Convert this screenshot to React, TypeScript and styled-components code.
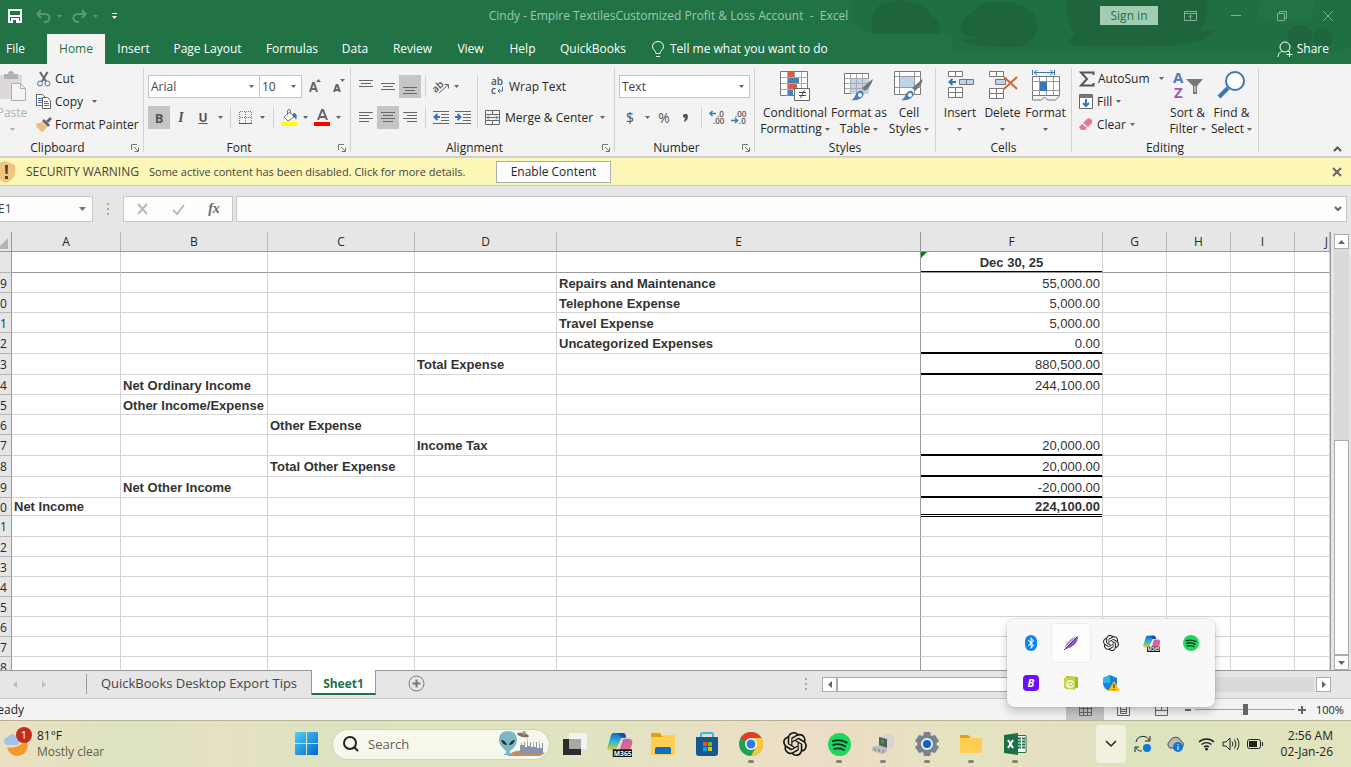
import React from 'react';
import styled, { createGlobalStyle, css } from 'styled-components';
import { SiOpenai } from 'react-icons/si';
import { FaBluetoothB } from 'react-icons/fa';

const GlobalStyle = createGlobalStyle`
  *, *::before, *::after { box-sizing: border-box; }
  html, body { margin: 0; height: 100%; }
  body { overflow: hidden; font-family: "Open Sans", "Noto Sans", sans-serif; font-size: 12px; line-height: 16px; color: #262626; }
  button, input, select { font: inherit; color: inherit; margin: 0; padding: 0; border: 0; background: none; border-radius: 0; }
  svg { display: block; flex: none; }
  h1, h2, p { margin: 0; font-size: inherit; font-weight: inherit; }
`;

const Window = styled.div`
  position: relative;
  display: flex;
  flex-direction: column;
  height: 100vh;
  overflow: hidden;
  background: #e6e6e6;
`;

/* ---------- title bar and tabs ---------- */

const Header = styled.header`
  position: relative;
  flex: none;
  background: #217346;
  color: #fff;
`;

const Clouds = styled.svg`
  position: absolute;
  top: 0;
  right: 0;
`;

const TitleBar = styled.div`
  position: relative;
  display: flex;
  align-items: center;
  height: 34px;
`;

const QuickAccess = styled.div`
  display: flex;
  align-items: center;
  gap: 1px;
  width: 237px;
  padding-bottom: 2px;
`;

const PlainButton = styled.button<{ $w?: number; $h?: number; $active?: boolean }>`
  display: flex;
  flex: none;
  align-items: center;
  justify-content: center;
  width: ${p => (p.$w ? `${p.$w}px` : 'auto')};
  height: ${p => (p.$h ? `${p.$h}px` : 'auto')};
  background: ${p => (p.$active ? '#c5c5c5' : 'transparent')};
`;

const ArrowPad = styled.span`
  margin-left: 6px;
`;

const DocTitle = styled.h1`
  flex: 1;
  padding-bottom: 2px;
  text-align: center;
  white-space: nowrap;
  color: #9bc9ae;
`;

const WindowControls = styled.div`
  display: flex;
  align-items: center;
  width: 251px;
  padding-bottom: 3px;
`;

const SignIn = styled.button`
  width: 58px;
  height: 19px;
  margin-right: 9px;
  background: #a0cdb3;
  color: #217346;
`;

const TabBar = styled.nav`
  position: relative;
  display: flex;
  height: 30px;
`;

const Tab = styled.button<{ $active?: boolean; $w: number }>`
  width: ${p => p.$w}px;
  white-space: nowrap;
  background: ${p => (p.$active ? '#f3f3f3' : 'transparent')};
  color: ${p => (p.$active ? '#217346' : '#fff')};
`;

const TellMe = styled.button`
  display: flex;
  align-items: center;
  gap: 6px;
  margin-left: 16px;
  white-space: nowrap;
`;

const Share = styled(TellMe)`
  margin-left: auto;
  margin-right: 22px;
  gap: 4px;
`;

/* ---------- ribbon ---------- */

const Ribbon = styled.div`
  display: flex;
  flex: none;
  height: 93px;
  padding-top: 4px;
  background: #f3f3f3;
  border-bottom: 1px solid #cdcdcd;
`;

const GroupBox = styled.section<{ $w: number; $edge?: boolean }>`
  display: flex;
  flex-direction: column;
  flex: none;
  width: ${p => p.$w}px;
  height: 84px;
  margin-left: ${p => (p.$edge ? -12 : 0)}px;
  border-right: 1px solid #d2d2d2;
`;

const GroupBody = styled.div`
  display: flex;
  flex: none;
  height: 71px;
`;

const GroupFoot = styled.div<{ $launcher?: boolean }>`
  display: grid;
  flex: none;
  grid-template-columns: ${p => (p.$launcher ? '1fr 16px' : '1fr')};
  align-items: center;
  height: 18px;
`;

const GroupName = styled.h2`
  text-align: center;
`;

const Rows = styled.div<{ $pad?: number }>`
  display: flex;
  flex-direction: column;
  gap: 8px;
  padding: 7px 0 0 ${p => p.$pad ?? 4}px;
`;

const Row = styled.div`
  display: flex;
  align-items: center;
  height: 23px;
`;

const List = styled.div<{ $left: number }>`
  display: flex;
  flex-direction: column;
  height: 69px;
  margin: -1px 0 0 ${p => p.$left}px;
`;

const ListButton = styled.button<{ $gap?: number }>`
  display: flex;
  align-items: center;
  gap: ${p => p.$gap ?? 3}px;
  height: 23px;
  white-space: nowrap;
`;

const Sep = styled.span<{ $h?: number; $l?: number; $r?: number }>`
  flex: none;
  width: 1px;
  height: ${p => p.$h ?? 21}px;
  margin: 0 ${p => p.$r ?? 4}px 0 ${p => p.$l ?? 4}px;
  background: #d2d2d2;
`;

const SelectWrap = styled.span<{ $w: number; $join?: boolean }>`
  position: relative;
  display: flex;
  align-items: center;
  width: ${p => p.$w}px;
  height: 23px;
  margin-left: ${p => (p.$join ? -1 : 0)}px;
  background: #fff;
  border: 1px solid #c5c5c5;
  svg { position: absolute; right: 5px; pointer-events: none; }
`;

const Select = styled.select`
  width: 100%;
  height: 100%;
  padding-left: 2px;
  appearance: none;
  outline: 0;
  color: #444;
`;

const Big = styled.button<{ $w: number; $dim?: boolean }>`
  display: flex;
  flex-direction: column;
  align-items: center;
  flex: none;
  width: ${p => p.$w}px;
  height: 71px;
  padding-top: 3px;
  white-space: nowrap;
  color: ${p => (p.$dim ? '#b1b1b1' : 'inherit')};
`;

const BigText = styled.span`
  margin-top: 3px;
  display: flex;
  flex-direction: column;
  align-items: center;
`;

const BigLine = styled.span`
  display: flex;
  align-items: center;
  gap: 3px;
  height: 16px;
`;

const Glyph = styled.span<{ $serif?: boolean; $size?: number; $kind?: string; $soft?: boolean }>`
  font-family: ${p => (p.$serif ? '"Liberation Serif", serif' : '"Open Sans", sans-serif')};
  font-size: ${p => p.$size ?? 14}px;
  font-weight: ${p => (p.$kind === 'plain' ? 500 : 700)};
  font-style: ${p => (p.$kind === 'italic' ? 'italic' : 'normal')};
  text-decoration: ${p => (p.$kind === 'underline' ? 'underline' : 'none')};
  color: ${p => (p.$soft ? '#6a6a6a' : '#555')};
`;

const CollapseButton = styled(PlainButton)`
  align-self: flex-end;
  margin: 0 9px 4px auto;
`;

/* ---------- warning and formula bars ---------- */

const Warning = styled.div`
  display: flex;
  align-items: center;
  flex: none;
  height: 29px;
  background: #fcf7b6;
  border-top: 1px solid #dfdb94;
  border-bottom: 1px solid #d3cf8b;
  white-space: nowrap;
  color: #444;
`;

const WarningTitle = styled.strong`
  width: 123px;
  margin-left: 10px;
  font-weight: 500;
`;

const WarningText = styled.p`
  width: 326px;
  font-size: 11px;
`;

const EnableButton = styled.button`
  width: 115px;
  height: 22px;
  margin-left: 21px;
  background: #fdfdfd;
  border: 1px solid #ababab;
  color: #262626;
`;

const CloseWarning = styled(PlainButton)`
  margin: 0 10px 0 auto;
`;

const FormulaRow = styled.div`
  display: flex;
  flex: none;
  height: 46px;
  padding: 10px 4px 0 0;
`;

const Field = styled.div<{ $w?: number; $edge?: boolean }>`
  display: flex;
  align-items: center;
  flex: ${p => (p.$w ? 'none' : '1')};
  width: ${p => (p.$w ? `${p.$w}px` : 'auto')};
  height: 26px;
  background: #fdfdfd;
  border: 1px solid #c6c6c6;
  border-left-width: ${p => (p.$edge ? 0 : 1)}px;
`;

const NameInput = styled.input`
  width: 74px;
  margin-left: -2px;
  outline: 0;
  color: #444;
`;

const FormulaInput = styled.input`
  flex: 1;
  min-width: 0;
  padding-left: 4px;
  outline: 0;
`;

const Dots = styled.span<{ $w: number }>`
  display: flex;
  flex-direction: column;
  align-items: center;
  justify-content: center;
  gap: 3px;
  width: ${p => p.$w}px;
  height: 26px;
  i { width: 2px; height: 2px; background: #a6a6a6; }
`;

/* ---------- sheet ---------- */

const SheetArea = styled.div`
  display: flex;
  flex: 1;
  min-height: 0;
`;

const GridClip = styled.div`
  flex: 1;
  min-width: 0;
  overflow: hidden;
  border-right: 1px solid #999;
`;

const Table = styled.table`
  width: 100%;
  table-layout: fixed;
  border-collapse: separate;
  border-spacing: 0;
  background: #fff;
`;

const ColHead = styled.th<{ $frozen?: boolean }>`
  height: 20px;
  padding: 1px 0 0;
  background: #e6e6e6;
  border-bottom: 1px solid #999;
  border-right: 1px solid ${p => (p.$frozen ? '#999' : '#b5b5b5')};
  font-weight: 400;
  line-height: 16px;
`;

const CornerHead = styled(ColHead)`
  padding: 4px 4px 0 0;
`;

const RowHead = styled.th<{ $h: number }>`
  height: ${p => p.$h}px;
  padding: 0 5px ${p => Math.max(0, Math.min(2, p.$h - 19))}px 0;
  background: #e6e6e6;
  border-right: 1px solid #999;
  border-bottom: 1px solid #b5b5b5;
  font-weight: 400;
  line-height: 15px;
  text-align: right;
  vertical-align: bottom;
`;

const JLabel = styled.span`
  display: block;
  padding-right: 1px;
  text-align: right;
`;

type Rule = 'thick' | 'double' | 'head' | undefined;

const Cell = styled.td<{ $bold?: boolean; $align?: string; $rule?: Rule; $tall?: boolean; $frozenX?: boolean; $frozenY?: boolean }>`
  position: relative;
  padding: 0 2px ${p => (p.$tall ? 1 : 0)}px;
  border-right: 1px solid ${p => (p.$frozenX ? '#999' : '#d4d4d4')};
  border-bottom: 1px solid ${p => (p.$frozenY ? '#999' : '#d4d4d4')};
  font-family: "Liberation Sans", Arial, sans-serif;
  font-size: 13px;
  line-height: 17px;
  font-weight: ${p => (p.$bold ? 700 : 400)};
  text-align: ${p => p.$align ?? 'left'};
  vertical-align: bottom;
  white-space: nowrap;
  color: #333;
  ${p => p.$rule === 'thick' && css`
    border-bottom-color: #000;
    box-shadow: inset 0 -1px 0 #000;
  `}
  ${p => p.$rule === 'head' && css`box-shadow: inset 0 -1px 0 #000;`}
  ${p => p.$rule === 'double' && css`
    border-bottom-color: #fff;
    box-shadow: inset 0 -1px 0 #000, 0 1px 0 #000;
  `}
`;

const ErrorMark = styled.i`
  position: absolute;
  top: 0;
  left: 0;
  border-top: 6px solid #008000;
  border-right: 6px solid transparent;
`;

const VScroll = styled.div`
  display: flex;
  flex-direction: column;
  flex: none;
  width: 20px;
  padding: 2px 2px 0 3px;
`;

const ScrollButton = styled.button`
  display: flex;
  flex: none;
  align-items: center;
  justify-content: center;
  width: 15px;
  height: 15px;
  background: #fff;
  border: 1px solid #ababab;
`;

const VTrack = styled.div`
  flex: 1;
  display: flex;
  flex-direction: column;
  justify-content: flex-end;
  background: #dadada;
`;

const VThumb = styled.div`
  height: 53%;
  background: #fff;
  border: 1px solid #ababab;
`;

const SheetBar = styled.div`
  display: flex;
  flex: none;
  height: 29px;
  border-top: 1px solid #999;
  border-bottom: 1px solid #c6c6c6;
`;

const SheetNav = styled.div`
  display: flex;
  align-items: center;
  width: 86px;
  height: 27px;
`;

const SheetTabs = styled.div`
  display: flex;
  align-items: flex-start;
  flex: 1;
`;

const SheetTab = styled.button<{ $active?: boolean; $w: number }>`
  width: ${p => p.$w}px;
  height: ${p => (p.$active ? 25 : 24)}px;
  margin-top: ${p => (p.$active ? -1 : 0)}px;
  font-size: 13px;
  white-space: nowrap;
  color: #444;
  border-right: 1px solid #999;
  ${p => p.$active && css`
    padding-top: 4px;
    font-size: 12px;
    font-weight: 700;
    background: #fff;
    color: #217346;
    border-bottom: 2px solid #217346;
  `}
`;

const TabEdge = styled.span`
  width: 1px;
  height: 20px;
  margin-top: 3px;
  background: #999;
`;

const NewSheet = styled(PlainButton)`
  margin: 4px 0 0 32px;
`;

const HScroll = styled.div`
  display: flex;
  align-items: center;
  flex: none;
  width: 529px;
  height: 27px;
  padding-right: 20px;
`;

const HTrack = styled.div`
  flex: 1;
  height: 15px;
  margin-right: 2px;
  background: #dadada;
`;

const HThumb = styled.div`
  width: 50%;
  height: 15px;
  background: #fff;
  border: 1px solid #ababab;
`;

const StatusBar = styled.footer`
  display: flex;
  align-items: center;
  flex: none;
  height: 21px;
  background: #f3f3f3;
`;

const ClipEnd = styled.span<{ $w: number }>`
  display: flex;
  justify-content: flex-end;
  width: ${p => p.$w}px;
  overflow: hidden;
`;

const StatusRight = styled.div`
  display: flex;
  align-items: center;
  margin-left: auto;
`;

const ZoomRange = styled.input`
  width: 100px;
  height: 12px;
  appearance: none;
  background: linear-gradient(#a0a0a0, #a0a0a0) center / 100% 1px no-repeat;
  &::-webkit-slider-thumb {
    appearance: none;
    width: 5px;
    height: 11px;
    background: #666;
  }
`;

const ZoomLabel = styled.span`
  width: 28px;
  margin: 0 7px;
  font-size: 11px;
`;

/* ---------- taskbar ---------- */

const Taskbar = styled.footer`
  display: flex;
  align-items: center;
  flex: none;
  height: 47px;
  border-top: 1px solid #b5b394;
  background: linear-gradient(90deg, #ebe0c2 0, #dbe3bf 10%, #e6e1c4 16%, #dde3c0 24%, #e0e3c0 42%, #ebdfc6 58%, #ecdcc5 62%, #e3e3c0 72%, #e6dfc3 78%, #dbe4be 84%, #e3e3bf 100%);
  color: #222;
`;

const Weather = styled.button`
  display: flex;
  align-items: center;
  gap: 4px;
  width: 285px;
  padding-left: 4px;
  text-align: left;
`;

const WeatherText = styled.span`
  display: flex;
  flex-direction: column;
  span:last-child { color: #5d5d50; }
`;

const SearchBox = styled.label`
  display: flex;
  align-items: center;
  width: 218px;
  height: 31px;
  margin: 0 3px;
  padding: 0 2px 0 10px;
  border-radius: 16px;
  border: 1px solid #d3d3b8;
  background: #f7f7ec;
  input {
    flex: 1;
    min-width: 0;
    margin-left: 9px;
    font-size: 13px;
    outline: 0;
  }
  input::placeholder { color: #5f5f5a; opacity: 1; }
`;

const TaskButton = styled.button<{ $open?: boolean }>`
  position: relative;
  display: flex;
  align-items: center;
  justify-content: center;
  flex: none;
  width: 44px;
  height: 46px;
  &::after {
    content: "";
    position: absolute;
    bottom: 4px;
    left: 19px;
    display: ${p => (p.$open ? 'block' : 'none')};
    width: 6px;
    height: 3px;
    border-radius: 2px;
    background: #85826f;
  }
`;

const Tray = styled.div`
  display: flex;
  align-items: center;
  margin-left: auto;
  padding-right: 18px;
`;

const TrayButton = styled.button<{ $w: number; $open?: boolean }>`
  display: flex;
  align-items: center;
  justify-content: center;
  width: ${p => p.$w}px;
  height: 38px;
  border-radius: 4px;
  background: ${p => (p.$open ? '#f2f0de' : 'transparent')};
`;

const Clock = styled.button`
  width: 61px;
  text-align: right;
  white-space: nowrap;
`;

const Flyout = styled.div`
  position: absolute;
  right: 136px;
  bottom: 60px;
  display: grid;
  grid-template-columns: repeat(5, 40px);
  grid-auto-rows: 40px;
  padding: 4px;
  border-radius: 8px;
  background: #f8f8f8;
  box-shadow: 0 0 0 1px rgba(0, 0, 0, 0.06), 0 4px 10px rgba(0, 0, 0, 0.22);
`;

const FlyoutItem = styled.button<{ $hover?: boolean }>`
  display: flex;
  align-items: center;
  justify-content: center;
  margin: 1px;
  border-radius: 4px;
  background: ${p => (p.$hover ? '#fdfdfd' : 'transparent')};
  box-shadow: ${p => (p.$hover ? '0 0 0 1px #ececec' : 'none')};
`;

const Tile = styled.span<{ $bg: string; $w: number; $round?: number }>`
  display: flex;
  align-items: center;
  justify-content: center;
  width: ${p => p.$w}px;
  height: 16px;
  border-radius: ${p => p.$round ?? 4}px;
  background: ${p => p.$bg};
  color: #fff;
  font-size: 11px;
  font-weight: 700;
  font-style: italic;
`;

/* ---------- icons ---------- */

type IconProps = { w?: number; h?: number; vb?: string; children?: React.ReactNode };
const Ic = ({ w = 16, h, vb, children }: IconProps) => (
  <svg width={w} height={h ?? w} viewBox={vb ?? `0 0 ${w} ${h ?? w}`} fill="none" overflow="visible" aria-hidden="true">
    {children}
  </svg>
);

const Down = ({ color = '#666' }: { color?: string }) => (
  <Ic w={5} h={3}><path d="M0 0h5L2.500 3z" fill={color} /></Ic>
);

const Launcher = () => (
  <PlainButton aria-label="More options">
    <Ic w={8} h={8}><path d="M.5 6V.5H6M3 3l4 4M7.500 3.500v4h-4" stroke="#777" /></Ic>
  </PlainButton>
);

const SaveIcon = () => (
  <Ic w={16}><path d="M2 2h12v12H2z" stroke="#fff" strokeWidth="2" /><path d="M2 8h12" stroke="#fff" strokeWidth="2" /><path d="M4 10h8v5H4z" fill="#fff" /><path d="M6 12h3v3H6z" fill="#217346" /></Ic>
);

const UndoIcon = ({ flip }: { flip?: boolean }) => (
  <Ic w={15} h={14}>
    <g transform={flip ? 'translate(15 0) scale(-1 1)' : undefined} stroke="#5a987a" strokeWidth="2">
      <path d="M5 1L1.500 5 5 9M2 5h7c3 0 4.500 2 4.500 4s-1.500 4-4.500 4H8" />
    </g>
  </Ic>
);

const Lines = ({ rows, indent }: { rows: number[][]; indent?: 'l' | 'r' }) => (
  <Ic w={16} h={14}>
    {rows.map(([x, y, w]) => <path key={`${x}${y}`} d={`M${x} ${y}.5h${w}`} stroke="#666" />)}
    {indent === 'l' && <path d="M7 6h-5M4.500 3L1.500 6l3 3" stroke="#3a76b4" strokeWidth="2" />}
    {indent === 'r' && <path d="M0 6h5M2.500 3l3 3-3 3" stroke="#3a76b4" strokeWidth="2" />}
  </Ic>
);

const PasteIcon = () => (
  <Ic w={30} h={31}>
    <path d="M2 4h23v24H2z" fill="#dcd8dc" />
    <path d="M7 3h4a3 3 0 0 1 6 0h4v5H7z" fill="#b4b0b4" />
    <path d="M14.500 12.500h9l5 5v12h-14z" fill="#f6f2f6" stroke="#b0acb0" />
    <path d="M23.500 12.500v5h5" stroke="#b0acb0" />
  </Ic>
);

const CutIcon = () => (
  <Ic w={16}>
    <path d="M4 1l6 9.500M11.500 1L6 10.500" stroke="#666" strokeWidth="2" />
    <circle cx="4" cy="12.500" r="2.500" stroke="#3a76b4" /><circle cx="11.500" cy="12.500" r="2.500" stroke="#3a76b4" />
  </Ic>
);

const CopyIcon = () => (
  <Ic w={16}>
    <path d="M.5.5h6l2.500 2.500v8.500H.5z" fill="#fff" stroke="#666" />
    <path d="M2 4.500h4M2 6.500h4M2 8.500h4" stroke="#3a76b4" />
    <path d="M6.500 3.500h5l3 3v8h-8z" fill="#fff" stroke="#666" />
    <path d="M8 7.500h4M8 9.500h5M8 11.500h5" stroke="#3a76b4" />
  </Ic>
);

const BrushIcon = () => (
  <Ic w={16}>
    <path d="M0 7l6-2 5 5-4 5-3-1-1-2-2-1z" fill="#ecc07c" />
    <path d="M6 4l2-2 6 6-2 2z" fill="#666" /><path d="M10 4l4-4 2 2-4 4z" fill="#666" />
  </Ic>
);

const BordersIcon = () => (
  <Ic w={14}>
    <path d="M.5 1v12M6.500 1v12M12.500 1v12M1 .5h12M1 6.500h12" stroke="#777" strokeDasharray="1 1" />
    <path d="M0 12.500h13" stroke="#555" />
  </Ic>
);

const FillIcon = () => (
  <Ic w={17} h={17}>
    <path d="M3 8l6-5 4 5-6 4z" fill="#fff" stroke="#777" /><path d="M6.500 6V2a1.500 1.500 0 0 1 3 0v3" stroke="#777" />
    <path d="M12 4c4 0 4.500 3 3 7-1-3-2-3-3-3z" fill="#3a76b4" />
    <path d="M0 13h16v4H0z" fill="#ff0" />
  </Ic>
);

const FontColor = () => (
  <Ic w={16} h={17}>
    <path d="M4 11L8 1h1l4 10M5.500 8h6" stroke="#666" strokeWidth="2" /><path d="M0 13h16v4H0z" fill="#f00" />
  </Ic>
);

const FontSize = ({ up }: { up?: boolean }) => (
  <Ic w={15} h={15}>
    {up
      ? <><path d="M2 13l3-9h1l3 9M3 10h5" stroke="#666" strokeWidth="2" /><path d="M8 3h5l-2.500-3z" fill="#3a76b4" /></>
      : <><path d="M2 13l2.500-7h1L8 13M3 11h4" stroke="#666" strokeWidth="2" /><path d="M8 0h5l-2.500 3z" fill="#3a76b4" /></>}
  </Ic>
);

const OrientIcon = () => (
  <Ic w={17} h={15}>
    <text x="-1" y="11" transform="rotate(-42 5 8)" fontSize="10" fontWeight="600" fill="#555">ab</text>
    <path d="M6 14l9-8M11.500 5.500h4v4" stroke="#666" />
  </Ic>
);

const WrapIcon = () => (
  <Ic w={14} h={17}>
    <text x="0" y="7" fontSize="10" fontWeight="600" fill="#555">ab</text>
    <text x="0" y="16" fontSize="10" fontWeight="600" fill="#555">c</text>
    <path d="M11.500 9v4H7M9 11l-2 2 2 2" stroke="#3a76b4" />
  </Ic>
);

const MergeIcon = () => (
  <Ic w={16} h={15}>
    <path d="M.5.5h14v14H.5zM.5 4.500h14M.5 10.500h14M7.500.5v4M7.500 10.500v4" stroke="#666" />
    <path d="M2 7.500h11M4 5.500l-2 2 2 2M11 5.500l2 2-2 2" stroke="#3a76b4" />
  </Ic>
);

const DecimalIcon = ({ more }: { more?: boolean }) => (
  <Ic w={16} h={15}>
    <text x={more ? 8 : 4} y="7" fontSize="8" fontWeight="600" fill="#555">{more ? '.0' : '.00'}</text>
    <text x={more ? 4 : 8} y="14" fontSize="8" fontWeight="600" fill="#555">{more ? '.00' : '.0'}</text>
    {more
      ? <path d="M7 3.500H1M3.500 1L1 3.500 3.500 6" stroke="#3a76b4" strokeWidth="1.500" />
      : <path d="M0 10.500h6M4 8l2.500 2.500L4 13" stroke="#3a76b4" strokeWidth="1.500" />}
  </Ic>
);

const ConditionalIcon = () => (
  <Ic w={30} h={31}>
    <path d="M.5.500h27v24H.5z" fill="#fff" stroke="#777" />
    <path d="M1 6.500h27M1 12.500h27M1 18.500h27M7.500 1v24M14.500 1v24M21.500 1v24" stroke="#aaa" />
    <path d="M8 1h6v5H8zM8 13h9v5H8z" fill="#d8613c" /><path d="M8 7h11v5H8zM8 19h5v5H8z" fill="#4a7fb8" />
    <path d="M14.500 17.500h15v12h-15z" fill="#fff" stroke="#666" />
    <path d="M19 21.500h7M19 24.500h7M24.500 19l-4 8" stroke="#444" />
  </Ic>
);

const Brush = () => (
  <>
    <path d="M29 8c-1 5-4 9-8 12l-3-3c4-3 6-6 11-9z" fill="#777" />
    <path d="M7 29c4-1 4-7 8-9 3-1 6 2 4 5s-6 5-12 4z" fill="#4a7fb8" /><circle cx="16" cy="24" r="2" fill="#fff" />
  </>
);

const TableIcon = () => (
  <Ic w={30} h={31}>
    <path d="M.5 2.500h24v20H.5z" fill="#fff" stroke="#777" /><path d="M7 8h18v15H7z" fill="#c0d3ea" />
    <path d="M1 7.500h24M1 12.500h24M1 17.500h24M6.500 3v20M12.500 3v20M18.500 3v20" stroke="#aaa" />
    <Brush />
  </Ic>
);

const StylesIcon = () => (
  <Ic w={30} h={31}>
    <path d="M.5.500h26v23H.5z" fill="#fff" stroke="#777" /><path d="M6 6h14v10H6z" fill="#c0d3ea" />
    <path d="M1 5.500h26M1 16.500h26M5.500 1v23M20.500 1v23" stroke="#999" />
    <Brush />
  </Ic>
);

const InsertIcon = () => (
  <Ic w={30} h={31}>
    <path d="M3.500.500h14v5h-14zM10.500.500v5M3.500 16.500h14v10h-14zM3.500 21.500h14M10.500 16.500v10" fill="#fff" stroke="#777" />
    <path d="M14.500 8.500h14v5h-14zM21.500 8.500v5" fill="#c0d3ea" stroke="#777" />
    <path d="M11 11H5M7.500 8l-3 3 3 3" stroke="#3a76b4" strokeWidth="2" />
  </Ic>
);

const DeleteIcon = () => (
  <Ic w={30} h={31}>
    <path d="M1.500.500h14v5h-14zM8.500.500v5M1.500 17.500h14v10h-14zM1.500 22.500h14M8.500 17.500v10" fill="#fff" stroke="#777" />
    <path d="M7.500 8.500h10v5h-10z" fill="#c0d3ea" stroke="#777" />
    <path d="M16 6l13 12M29 6L16 18" stroke="#d8613c" strokeWidth="2" />
  </Ic>
);

const FormatIcon = () => (
  <Ic w={30} h={31}>
    <path d="M1.500-1v5M23.500-1v5M3 1.500h20M6-1L3 1.500 6 4M19-1l3 2.500L19 4" stroke="#3a76b4" />
    <path d="M1.500 5.500h27v19h-27z" fill="#fff" stroke="#777" />
    <path d="M1 10.500h27M1 19.500h27M8.500 6v18M15.500 6v18M22.500 6v18" stroke="#999" />
    <path d="M9 11h7v9H9z" fill="#3a76b4" />
    <path d="M1.500 25v4h9l3-3 3 3h8l4-4" fill="#f3f3f3" stroke="#777" />
  </Ic>
);

const SumIcon = () => <Ic w={16}><path d="M14.500 4V1.500H2L8 8l-6 6.500h12.500V12" stroke="#555" strokeWidth="2" /></Ic>;
const FillDownIcon = () => (
  <Ic w={14} h={15}><path d="M.5.5h13v14H.5z" fill="#fff" stroke="#666" /><path d="M1 1h12v3H1z" fill="#777" /><path d="M7 5v7M4 9l3 3 3-3" stroke="#3a76b4" strokeWidth="2" /></Ic>
);
const EraserIcon = () => (
  <Ic w={14} h={13}><path d="M8 1l2-1 3 2v3l-4 4-5-4z" fill="#e8798f" /><path d="M3 6l5 4-2 2H2L0 9z" fill="#e8798f" /></Ic>
);
const SortIcon = () => (
  <Ic w={30} h={31}>
    <text x="0" y="12" fontSize="15" fontWeight="700" fill="#4a7fb8">A</text>
    <text x="1" y="27" fontSize="15" fontWeight="700" fill="#9b5bb8">Z</text>
    <path d="M13 8h17l-6 7v8h-4v-8z" fill="#777" /><path d="M22 15v6" stroke="#fff" />
  </Ic>
);
const FindIcon = () => (
  <Ic w={30} h={31}><circle cx="18" cy="10" r="9" fill="#fff" stroke="#3a76b4" strokeWidth="2" /><path d="M11 17l-9 9" stroke="#3a76b4" strokeWidth="4" /></Ic>
);

const ShieldIcon = () => (
  <svg width="16" height="22" viewBox="0 0 16 22" aria-hidden="true"><path d="M-6 4l11-4 10 4v8c0 4-5 8-9 10-7-3-12-6-12-10z" fill="#efc67c" /><path d="M5 4h3l-.5 9h-2zM5 15h3v3H5z" fill="#444" /></svg>
);

const M365Icon = ({ size }: { size: number }) => (
  <Ic w={size} h={size} vb="0 0 26 26">
    <defs>
      <linearGradient id="m365a" x1="0" y1="0" x2="0" y2="1"><stop stopColor="#1b62d8" /><stop offset=".5" stopColor="#2db7c8" /><stop offset="1" stopColor="#e9cf2c" /></linearGradient>
      <linearGradient id="m365b" x1="0" y1="0" x2="1" y2="1"><stop stopColor="#b45cf0" /><stop offset="1" stopColor="#f0704c" /></linearGradient>
    </defs>
    <path d="M7 1h10c2 0 2 2 3 4l-5 1-4 9c-1 3-3 4-5 4H3c-3 0-3-3-2-5L4 4c1-2 1-3 3-3z" fill="url(#m365a)" />
    <path d="M11 1h6c2 0 2 2 3 5h-5z" fill="#1749b0" />
    <path d="M18 7h5c3 0 4 3 3 6l-2 6H13l3-9c0-2 1-3 2-3z" fill="url(#m365b)" />
    <path d="M6 18h20v8H6z" fill="#111" />
    <text x="7" y="25" fontSize="7" fontWeight="700" fill="#fff">M365</text>
  </Ic>
);

const SpotifyIcon = ({ size }: { size: number }) => (
  <Ic w={size} h={size} vb="0 0 24 24">
    <circle cx="12" cy="12" r="12" fill="#1ed760" />
    <path d="M5 8.500c5-1.500 10-1 14.500 1.500M5.500 12.500c4-1.500 8.500-1 12.500 1.500M6.500 16.500c3.500-1 6.500-.5 10 1" stroke="#10341c" strokeWidth="2" strokeLinecap="round" />
  </Ic>
);

const WindowsIcon = () => (
  <Ic w={24}>
    <defs><linearGradient id="win" x1="0" y1="0" x2="1" y2="1"><stop stopColor="#4fd0fb" /><stop offset="1" stopColor="#0068c8" /></linearGradient></defs>
    <path d="M0 1a1 1 0 0 1 1-1h10v11H0zM12 0h10a1 1 0 0 1 1 1v10H12zM0 12h11v11H1a1 1 0 0 1-1-1zM12 12h11v10a1 1 0 0 1-1 1H12z" fill="url(#win)" />
  </Ic>
);

const AlienIcon = () => (
  <Ic w={48} h={28}>
    <path d="M14 22c8-3 24-2 32 1l-5 3H8z" fill="#c98a52" />
    <path d="M21 23v-8h1v-4l1 4h2v-3h1v5h2V5l1 11h2v-4h1v5h2V9l1 8h2v-5h1v6h2V8l1 10h2v-5h1v10z" fill="#8a93ae" />
    <ellipse cx="24" cy="5" rx="6" ry="2" transform="rotate(12 24 5)" fill="#7d7064" /><circle cx="25" cy="3" r="2" fill="#a59a8a" />
    <path d="M0 10c0-6 4-9 9-9s9 3 9 9c0 5-5 10-7 11v2l3 2H4l3-2v-2c-2-2-7-6-7-11z" fill="#7db8c2" />
    <path d="M2 10c3 0 5 2 6 5-3 0-5-2-6-5zM16 10c-3 0-5 2-6 5 3 0 5-2 6-5z" fill="#1d3038" />
  </Ic>
);

const TaskViewIcon = () => (
  <Ic w={25} h={24}><path d="M0 7h18v16H0z" fill="#2c2c2c" /><path d="M6 1h18v16H6z" fill="#f2f2f2" /><path d="M6 7h12v10H6z" fill="#a8a8a8" /></Ic>
);

const FolderIcon = ({ plain }: { plain?: boolean }) => (
  <Ic w={24} h={22}>
    <path d={plain ? 'M1 2h8l3 3h11v6H1z' : 'M0 0h9l2 3h13v6H0z'} fill="#e3a008" /><path d={plain ? 'M1 5h22v15H1z' : 'M0 4h11l2-2h11v20H0z'} fill="#fdce50" />
    {!plain && <path d="M4 21v-5a2 2 0 0 1 2-2h12a2 2 0 0 1 2 2v5z" fill="#0e70c0" />}
  </Ic>
);

const StoreIcon = () => (
  <Ic w={24} h={24}>
    <path d="M6 6V3a2 2 0 0 1 2-2h8a2 2 0 0 1 2 2v3" stroke="#35b8ee" strokeWidth="2" />
    <path d="M1 5h22v16a3 3 0 0 1-3 3H4a3 3 0 0 1-3-3z" fill="#155893" />
    <path d="M8 10h4v4H8z" fill="#f25022" /><path d="M13 10h4v4h-4z" fill="#7fba00" /><path d="M8 15h4v4H8z" fill="#00a4ef" /><path d="M13 15h4v4h-4z" fill="#ffb900" />
  </Ic>
);

const ChromeIcon = () => (
  <Ic w={24} h={24}>
    <circle cx="12" cy="12" r="12" fill="#1fa251" />
    <path d="M12 12L1.600 6A12 12 0 0 1 22.400 6z" fill="#e33b2e" /><path d="M12 6h10.400A12 12 0 0 1 12 24l5.200-9z" fill="#fcc934" />
    <circle cx="12" cy="12" r="6" fill="#fff" /><circle cx="12" cy="12" r="4.500" fill="#2f7de9" />
  </Ic>
);

const MachineIcon = () => (
  <Ic w={22} h={20}>
    <path d="M7 3l9-3 6 2v11l-8 3-7-3z" fill="#d4d4d4" /><path d="M7 3l8 2v9l-8-2z" fill="#5b5b5b" /><path d="M9 5l3 1v4l-3-1z" fill="#12b62c" />
    <path d="M0 13l7-2 8 3v4l-5 2-10-3z" fill="#bdbdbd" /><path d="M3 14v3M7 15v3M11 16v3" stroke="#777" />
  </Ic>
);

const SettingsIcon = () => (
  <Ic w={24} h={24}>
    <path d="M9 0h6l1 4 4-1 4 6-3 3 3 3-4 6-4-1-1 4H9l-1-4-4 1-4-6 3-3-3-3 4-6 4 1z" fill="#77838f" />
    <circle cx="12" cy="12" r="6" fill="#e6eef5" /><circle cx="12" cy="12" r="4" fill="#1363b8" />
  </Ic>
);

const ExcelIcon = () => (
  <Ic w={23} h={22}>
    <path d="M12 2.500h10v17H12z" fill="#fff" stroke="#217346" />
    <path d="M14 5.500h3M18 5.500h3M14 8.500h3M18 8.500h3M14 11.500h3M18 11.500h3M14 14.500h3M18 14.500h3" stroke="#217346" strokeWidth="2" />
    <path d="M0 2l14-2v22L0 20z" fill="#1d7044" /><path d="M4 7l5 8M9 7l-5 8" stroke="#fff" strokeWidth="2" />
  </Ic>
);

/* ---------- data ---------- */

type SheetRow = { n: string; h: number; col?: string; label?: string; value?: string; rule?: Rule; bold?: boolean };

const rows: SheetRow[] = [
  { n: '9', h: 20, col: 'E', label: 'Repairs and Maintenance', value: '55,000.00' },
  { n: '0', h: 20, col: 'E', label: 'Telephone Expense', value: '5,000.00' },
  { n: '1', h: 20, col: 'E', label: 'Travel Expense', value: '5,000.00' },
  { n: '2', h: 21, col: 'E', label: 'Uncategorized Expenses', value: '0.00', rule: 'thick' },
  { n: '3', h: 21, col: 'D', label: 'Total Expense', value: '880,500.00', rule: 'thick' },
  { n: '4', h: 20, col: 'B', label: 'Net Ordinary Income', value: '244,100.00' },
  { n: '5', h: 20, col: 'B', label: 'Other Income/Expense' },
  { n: '6', h: 20, col: 'C', label: 'Other Expense' },
  { n: '7', h: 21, col: 'D', label: 'Income Tax', value: '20,000.00', rule: 'thick' },
  { n: '8', h: 21, col: 'C', label: 'Total Other Expense', value: '20,000.00', rule: 'thick' },
  { n: '9', h: 21, col: 'B', label: 'Net Other Income', value: '-20,000.00', rule: 'thick' },
  { n: '0', h: 18, col: 'A', label: 'Net Income', value: '224,100.00', rule: 'double', bold: true },
  { n: '1', h: 21 },
  ...['2', '3', '4', '5', '6', '7', '8'].map(n => ({ n, h: 20 })),
];

const columns: [string, number?][] = [
  ['A', 109], ['B', 147], ['C', 147], ['D', 142], ['E', 364], ['F', 182], ['G', 64], ['H', 64], ['I', 64], ['J'],
];

const tabs: [string, number][] = [
  ['Insert', 57], ['Page Layout', 91], ['Formulas', 78], ['Data', 48], ['Review', 67], ['View', 49], ['Help', 55], ['QuickBooks', 86],
];

const Group = ({ name, w, launcher, edge, children }: { name: string; w: number; launcher?: boolean; edge?: boolean; children: React.ReactNode }) => (
  <GroupBox $w={w} $edge={edge} aria-label={name}>
    <GroupBody>{children}</GroupBody>
    <GroupFoot $launcher={launcher}><GroupName>{name}</GroupName>{launcher && <Launcher />}</GroupFoot>
  </GroupBox>
);

const BigButton = ({ w, icon, top, bottom, dim }: { w: number; icon: React.ReactNode; top: string; bottom?: string; dim?: boolean }) => (
  <Big $w={w} $dim={dim}>
    {icon}
    <BigText><BigLine>{top}</BigLine><BigLine>{bottom}<Down color={dim ? '#b1b1b1' : '#666'} /></BigLine></BigText>
  </Big>
);

const Combo = ({ label, value, w, join }: { label: string; value: string; w: number; join?: boolean }) => (
  <SelectWrap $w={w} $join={join}>
    <Select aria-label={label} defaultValue={value}><option>{value}</option></Select>
    <Down />
  </SelectWrap>
);

const Arrow = ({ w = 16 }: { w?: number }) => <PlainButton $w={w} $h={22} aria-label="Options"><Down /></PlainButton>;

const PaleArrow = () => <ArrowPad><Down color="#5a987a" /></ArrowPad>;

export default function App() {
  return (
    <Window>
      <GlobalStyle />
      <Header>
        <Clouds width="520" height="52" viewBox="0 0 520 52" aria-hidden="true">
          <path d="M20 0h500v48q-40 8-100 2H120V34H40Q20 30 20 0z" fill="#206e43" />
          <g fill="#1e653d">
            <path d="M42 34q-6-18 8-30l20-4q30 4 30 16 12 4 8 18z" />
            <path d="M130 30q-2-12 12-17 4-12 32-11 32 4 32 22 0 14-10 19 0 4-16 4-40 0-52-8 14 2 20-1-16-2-18-8z" />
            <path d="M236 0h140q2 22-8 30 8 2 16-1-6 16-50 16-80 4-98-2l8-10q-10-12-8-33z" />
            <circle cx="469" cy="37" r="12" /><circle cx="492" cy="38" r="10" />
          </g>
          <path d="M430 0h52q6 20-16 22-30 6-40-8z" fill="#217346" />
        </Clouds>
        <TitleBar>
          <QuickAccess>
            <PlainButton $w={30} aria-label="Save"><SaveIcon /></PlainButton>
            <PlainButton $w={35} aria-label="Undo"><UndoIcon /><PaleArrow /></PlainButton>
            <PlainButton $w={35} aria-label="Redo"><UndoIcon flip /><PaleArrow /></PlainButton>
            <PlainButton $w={22} aria-label="Customize Quick Access Toolbar"><Ic w={5} h={6}><path d="M0 .5h5" stroke="#fff" /><path d="M0 3h5L2.500 6z" fill="#fff" /></Ic></PlainButton>
          </QuickAccess>
          <DocTitle>Cindy - Empire TextilesCustomized Profit &amp; Loss Account&nbsp; -&nbsp; Excel</DocTitle>
          <WindowControls>
            <SignIn>Sign in</SignIn>
            <PlainButton $w={46} aria-label="Ribbon display options"><Ic w={13} h={10}><path d="M.5.500h12v9H.5zM.5 2.500h12M6.500 8.500v-4M4.500 6l2-2 2 2" stroke="#80b296" /></Ic></PlainButton>
            <PlainButton $w={46} aria-label="Minimize"><Ic w={10} h={1}><path d="M0 .5h10" stroke="#80b296" /></Ic></PlainButton>
            <PlainButton $w={46} aria-label="Restore"><Ic w={10} h={10}><path d="M.5 2.500h7v7h-7zM2.500 2.500v-2h7v7h-2" stroke="#80b296" /></Ic></PlainButton>
            <PlainButton $w={46} aria-label="Close"><Ic w={10} h={10}><path d="M0 0l10 10M10 0L0 10" stroke="#80b296" /></Ic></PlainButton>
          </WindowControls>
        </TitleBar>
        <TabBar>
          <Tab $w={31}>File</Tab>
          <Sep $h={0} $l={7} $r={8} />
          <Tab $w={58} $active>Home</Tab>
          {tabs.map(([t, w]) => <Tab key={t} $w={w}>{t}</Tab>)}
          <TellMe>
            <Ic w={12} h={16}><path d="M4 12.500c0-3-3.500-3.500-3.500-7a5.500 5 0 0 1 11 0c0 3.500-3.500 4-3.500 7zM4 15.500h4" stroke="#fff" /></Ic>
            Tell me what you want to do
          </TellMe>
          <Share>
            <Ic w={16} h={17}><circle cx="8" cy="6" r="5" stroke="#fff" /><path d="M1 16c0-3 2-5 4-6M11 10l1 1M12.500 10v6M9.500 13.500h6" stroke="#fff" /></Ic>
            Share
          </Share>
        </TabBar>
      </Header>

      <Ribbon>
        <Group name="Clipboard" w={156} launcher edge>
          <BigButton w={48} icon={<PasteIcon />} top="Paste" dim />
          <List $left={0}>
            <ListButton><CutIcon />Cut</ListButton>
            <ListButton><CopyIcon />Copy<ArrowPad><Down /></ArrowPad></ListButton>
            <ListButton><BrushIcon />Format Painter</ListButton>
          </List>
        </Group>
        <Group name="Font" w={207} launcher>
          <Rows>
            <Row>
              <Combo label="Font" value="Arial" w={112} />
              <Combo label="Font size" value="10" w={43} join />
              <PlainButton $w={26} aria-label="Increase font size"><FontSize up /></PlainButton>
              <PlainButton $w={22} aria-label="Decrease font size"><FontSize /></PlainButton>
            </Row>
            <Row>
              <PlainButton $w={22} $h={23} $active aria-label="Bold"><Glyph $size={13}>B</Glyph></PlainButton>
              <PlainButton $w={22} aria-label="Italic"><Glyph $serif $kind="italic">I</Glyph></PlainButton>
              <PlainButton $w={22} aria-label="Underline"><Glyph $kind="underline" $size={12}>U</Glyph></PlainButton>
              <Arrow w={12} /><Sep $r={8} /><PlainButton aria-label="Borders"><BordersIcon /></PlainButton><Arrow w={19} />
              <Sep $l={1} $r={7} /><PlainButton aria-label="Fill color"><FillIcon /></PlainButton><Arrow w={14} />
              <PlainButton $w={20} aria-label="Font color"><FontColor /></PlainButton><Arrow w={12} />
            </Row>
          </Rows>
        </Group>
        <Group name="Alignment" w={264} launcher>
          <Rows>
            <Row>
              <PlainButton $w={22} $h={23} aria-label="Top align"><Lines rows={[[1, 0, 14], [3, 3, 10], [1, 6, 14]]} /></PlainButton>
              <PlainButton $w={22} $h={23} aria-label="Middle align"><Lines rows={[[1, 3, 14], [3, 6, 10], [1, 9, 14]]} /></PlainButton>
              <PlainButton $w={22} $h={23} $active aria-label="Bottom align"><Lines rows={[[1, 7, 14], [3, 10, 10], [1, 13, 14]]} /></PlainButton>
              <Sep $r={7} /><PlainButton aria-label="Orientation"><OrientIcon /></PlainButton><Arrow w={12} />
            </Row>
            <Row>
              <PlainButton $w={22} $h={23} aria-label="Align left"><Lines rows={[[1, 1, 14], [1, 4, 10], [1, 7, 14], [1, 10, 10]]} /></PlainButton>
              <PlainButton $w={22} $h={23} $active aria-label="Center"><Lines rows={[[1, 1, 14], [3, 4, 10], [1, 7, 14], [3, 10, 10]]} /></PlainButton>
              <PlainButton $w={22} $h={23} aria-label="Align right"><Lines rows={[[1, 1, 14], [5, 4, 10], [1, 7, 14], [5, 10, 10]]} /></PlainButton>
              <Sep />
              <PlainButton $w={22} aria-label="Decrease indent"><Lines indent="l" rows={[[0, 0, 16], [8, 3, 8], [8, 6, 8], [8, 9, 8], [0, 12, 16]]} /></PlainButton>
              <PlainButton $w={22} aria-label="Increase indent"><Lines indent="r" rows={[[0, 0, 16], [8, 3, 8], [8, 6, 8], [8, 9, 8], [0, 12, 16]]} /></PlainButton>
            </Row>
          </Rows>
          <Rows $pad={3}><Sep $h={54} $l={0} $r={7} /></Rows>
          <Rows $pad={0}>
            <Row><ListButton $gap={4}><Ic w={2} h={1} /><WrapIcon />Wrap Text</ListButton></Row>
            <Row><ListButton $gap={4}><MergeIcon />Merge &amp; Center</ListButton><Arrow w={18} /></Row>
          </Rows>
        </Group>
        <Group name="Number" w={140} launcher>
          <Rows>
            <Row><Combo label="Number format" value="Text" w={131} /></Row>
            <Row>
              <PlainButton $w={22} aria-label="Accounting format"><Glyph $kind="plain">$</Glyph></PlainButton><Arrow w={12} />
              <PlainButton $w={22} aria-label="Percent"><Glyph $kind="plain">%</Glyph></PlainButton>
              <PlainButton $w={21} aria-label="Comma style"><Ic w={5} h={8}><path d="M1 0h3l1 2c0 3-1 5-4 6l1-4-2-1V1z" fill="#555" /></Ic></PlainButton>
              <Sep $l={5} $r={4} />
              <PlainButton $w={22} aria-label="Increase decimal"><DecimalIcon more /></PlainButton>
              <PlainButton $w={22} aria-label="Decrease decimal"><DecimalIcon /></PlainButton>
            </Row>
          </Rows>
        </Group>
        <Group name="Styles" w={181}>
          <Sep $h={0} $l={2} $r={1} />
          <BigButton w={72} icon={<ConditionalIcon />} top="Conditional" bottom="Formatting" />
          <BigButton w={56} icon={<TableIcon />} top="Format as" bottom="Table" />
          <BigButton w={44} icon={<StylesIcon />} top="Cell" bottom="Styles" />
        </Group>
        <Group name="Cells" w={136}>
          <Sep $h={0} $l={1} $r={1} />
          <BigButton w={42} icon={<InsertIcon />} top="Insert" />
          <BigButton w={43} icon={<DeleteIcon />} top="Delete" />
          <BigButton w={43} icon={<FormatIcon />} top="Format" />
        </Group>
        <Group name="Editing" w={187}>
          <List $left={7}>
            <ListButton><SumIcon />AutoSum<ArrowPad><Down /></ArrowPad></ListButton>
            <ListButton $gap={4}><FillDownIcon />Fill<Down /></ListButton>
            <ListButton $gap={4}><EraserIcon />Clear<Down /></ListButton>
          </List>
          <BigButton w={48} icon={<SortIcon />} top="Sort &amp;" bottom="Filter" />
          <BigButton w={40} icon={<FindIcon />} top="Find &amp;" bottom="Select" />
        </Group>
        <CollapseButton aria-label="Collapse the ribbon"><Ic w={9} h={6}><path d="M1 5l3.500-3.500L8 5" stroke="#555" strokeWidth="2" /></Ic></CollapseButton>
      </Ribbon>

      <Warning>
        <ShieldIcon />
        <WarningTitle>SECURITY WARNING</WarningTitle>
        <WarningText>Some active content has been disabled. Click for more details.</WarningText>
        <EnableButton>Enable Content</EnableButton>
        <CloseWarning aria-label="Close"><Ic w={8} h={8}><path d="M0 0l8 8M8 0L0 8" stroke="#666" strokeWidth="2" /></Ic></CloseWarning>
      </Warning>

      <FormulaRow>
        <Field $w={93} $edge><NameInput aria-label="Name box" defaultValue="E1" /><PlainButton $w={20} aria-label="Names"><Ic w={7} h={4}><path d="M0 0h7L3.500 4z" fill="#777" /></Ic></PlainButton></Field>
        <Dots $w={30}><i /><i /><i /></Dots>
        <Field $w={110}>
          <PlainButton $w={36} aria-label="Cancel"><Ic w={11} h={10}><path d="M1 0l9 10M10 0L1 10" stroke="#bbb" strokeWidth="2" /></Ic></PlainButton>
          <PlainButton $w={36} aria-label="Enter"><Ic w={13} h={11}><path d="M1 6l4 4 7-9" stroke="#bbb" strokeWidth="2" /></Ic></PlainButton>
          <PlainButton $w={36} aria-label="Insert function"><Glyph $serif $soft $kind="italic">fx</Glyph></PlainButton>
        </Field>
        <Sep $h={0} $l={1} $r={1} />
        <Field><FormulaInput aria-label="Formula bar" /><PlainButton $w={17} aria-label="Expand formula bar"><Ic w={8} h={6}><path d="M1 1l3 3 3-3" stroke="#666" strokeWidth="2" /></Ic></PlainButton></Field>
      </FormulaRow>

      <SheetArea>
        <GridClip>
          <Table>
            <colgroup>
              <col width={12} />
              {columns.map(([c, w]) => <col key={c} width={w} />)}
            </colgroup>
            <thead>
              <tr>
                <CornerHead $frozen aria-label="Select all"><Ic w={8} h={11}><path d="M8 0v11H0V8z" fill="#b5b5b5" /></Ic></CornerHead>
                {columns.map(([c]) => <ColHead key={c} $frozen={c === 'E'} scope="col">{c === 'J' ? <JLabel>J</JLabel> : c}</ColHead>)}
              </tr>
            </thead>
            <tbody>
              <tr>
                <RowHead $h={21} scope="row" />
                {columns.map(([c]) => (
                  <Cell key={c} $frozenY $frozenX={c === 'E'} $bold $tall $align="center" $rule={c === 'F' ? 'head' : undefined}>
                    {c === 'F' && <><ErrorMark />Dec 30, 25</>}
                  </Cell>
                ))}
              </tr>
              {rows.map((r, i) => (
                <tr key={i}>
                  <RowHead $h={r.h} scope="row">{r.n}</RowHead>
                  {columns.map(([c]) => c === 'F'
                    ? <Cell key={c} $align="right" $tall={r.h > 20} $rule={r.rule} $bold={r.bold}>{r.value}</Cell>
                    : <Cell key={c} $bold $tall={r.h > 20} $frozenX={c === 'E'}>{r.col === c ? r.label : null}</Cell>)}
                </tr>
              ))}
            </tbody>
          </Table>
        </GridClip>
        <VScroll>
          <ScrollButton aria-label="Scroll up"><Ic w={7} h={4}><path d="M0 4h7L3.500 0z" fill="#666" /></Ic></ScrollButton>
          <VTrack><VThumb /></VTrack>
          <ScrollButton aria-label="Scroll down"><Ic w={7} h={4}><path d="M0 0h7L3.500 4z" fill="#666" /></Ic></ScrollButton>
        </VScroll>
      </SheetArea>

      <SheetBar>
        <SheetNav>
          <PlainButton $w={30} aria-label="Previous sheet"><Ic w={4} h={7}><path d="M4 0v7L0 3.500z" fill="#bbb" /></Ic></PlainButton>
          <PlainButton $w={28} aria-label="Next sheet"><Ic w={4} h={7}><path d="M0 0v7l4-3.500z" fill="#bbb" /></Ic></PlainButton>
        </SheetNav>
        <SheetTabs>
          <TabEdge />
          <SheetTab $w={225}>QuickBooks Desktop Export Tips</SheetTab>
          <SheetTab $w={64} $active>Sheet1</SheetTab>
          <NewSheet aria-label="New sheet"><Ic w={17}><circle cx="8.500" cy="8.500" r="7.500" stroke="#777" /><path d="M8.500 4.500v8M4.500 8.500h8" stroke="#777" strokeWidth="2" /></Ic></NewSheet>
        </SheetTabs>
        <Dots $w={32}><i /><i /><i /></Dots>
        <HScroll>
          <ScrollButton aria-label="Scroll left"><Ic w={4} h={7}><path d="M4 0v7L0 3.500z" fill="#666" /></Ic></ScrollButton>
          <HTrack><HThumb /></HTrack>
          <ScrollButton aria-label="Scroll right"><Ic w={4} h={7}><path d="M0 0v7l4-3.500z" fill="#666" /></Ic></ScrollButton>
        </HScroll>
      </SheetBar>

      <StatusBar>
        <ClipEnd $w={24}>Ready</ClipEnd>
        <StatusRight>
          <PlainButton $w={38} $h={21} $active aria-label="Normal view"><Ic w={13} h={12}><path d="M.5.500h12v11H.5zM.5 4.500h12M.5 8.500h12M4.500.500v11M8.500.500v11" stroke="#666" /></Ic></PlainButton>
          <PlainButton $w={38} $h={21} aria-label="Page layout view"><Ic w={13} h={12}><path d="M.5.500h12v11H.5zM3.500 2.500h6v7h-6zM4 5.500h5M4 7.500h5" stroke="#666" /></Ic></PlainButton>
          <PlainButton $w={38} $h={21} aria-label="Page break view"><Ic w={13} h={12}><path d="M.5.500h12v11H.5zM.5 6.500h6v-6M6.500 6.500h6" stroke="#666" /></Ic></PlainButton>
          <PlainButton $w={15} aria-label="Zoom out"><Ic w={6} h={2}><path d="M0 1h6" stroke="#666" strokeWidth="2" /></Ic></PlainButton>
          <ZoomRange type="range" min={0} max={100} defaultValue={50} aria-label="Zoom" />
          <PlainButton $w={14} aria-label="Zoom in"><Ic w={8} h={8}><path d="M0 4h8M4 0v8" stroke="#666" strokeWidth="2" /></Ic></PlainButton>
          <ZoomLabel>100%</ZoomLabel>
        </StatusRight>
      </StatusBar>

      <Taskbar>
        <Weather>
          <Ic w={29} h={30}>
            <path d="M3 18c6 2 16-1 19-9 4 9 0 18-9 18-5 0-9-4-10-9z" fill="#f39a2b" />
            <path d="M4 16a4 4 0 0 1 0-8c1-3 6-4 8-1 4 0 5 8 1 9z" fill="#a6c1ee" />
            <circle cx="20" cy="6" r="8" fill="#c42b1c" />
            <text x="20" y="10" textAnchor="middle" fontSize="11" fill="#fff">1</text>
          </Ic>
          <WeatherText><span>81°F</span><span>Mostly clear</span></WeatherText>
        </Weather>
        <TaskButton aria-label="Start"><WindowsIcon /></TaskButton>
        <SearchBox>
          <Ic w={16} h={16}><circle cx="7" cy="7" r="6" stroke="#222" strokeWidth="2" /><path d="M11 11l4 4" stroke="#222" strokeWidth="2" /></Ic>
          <input type="text" placeholder="Search" aria-label="Search" />
          <AlienIcon />
        </SearchBox>
        <TaskButton aria-label="Task view"><TaskViewIcon /></TaskButton>
        <TaskButton aria-label="Microsoft 365"><M365Icon size={25} /></TaskButton>
        <TaskButton aria-label="File Explorer"><FolderIcon /></TaskButton>
        <TaskButton aria-label="Store"><StoreIcon /></TaskButton>
        <TaskButton aria-label="Chrome" $open><ChromeIcon /></TaskButton>
        <TaskButton aria-label="ChatGPT"><SiOpenai size={24} color="#111" /></TaskButton>
        <TaskButton aria-label="Spotify" $open><SpotifyIcon size={23} /></TaskButton>
        <TaskButton aria-label="Device" $open><MachineIcon /></TaskButton>
        <TaskButton aria-label="Settings" $open><SettingsIcon /></TaskButton>
        <TaskButton aria-label="Folder" $open><FolderIcon plain /></TaskButton>
        <TaskButton aria-label="Excel" $open><ExcelIcon /></TaskButton>
        <Tray>
          <TrayButton $w={30} $open aria-label="Hidden icons"><Ic w={12} h={8}><path d="M1 1l5 5 5-5" stroke="#222" strokeWidth="1.500" /></Ic></TrayButton>
          <TrayButton $w={34} aria-label="Updates"><Ic w={18} h={18}><path d="M2 7a7 7 0 0 1 13-2M16 1v5h-5M1 12h4M1 12v5M2 13c2 3 4 3 6 3" stroke="#222" /><circle cx="13" cy="13" r="4" fill="#0f78d4" /></Ic></TrayButton>
          <TrayButton $w={30} aria-label="OneDrive"><Ic w={18} h={16}><path d="M4 12a4 4 0 0 1 0-7c2-5 9-5 11 0 3 1 3 6 0 7z" fill="#b9b9b2" stroke="#444" /><circle cx="12" cy="11" r="5" fill="#0f78d4" /><path d="M12 10v4M12 8v1" stroke="#fff" /></Ic></TrayButton>
          <TrayButton $w={82} aria-label="Network, sound and battery">
            <Ic w={64} h={16}>
              <path d="M0 6a11 11 0 0 1 15 0M2.500 8.500a8 8 0 0 1 10 0M5 11a4 4 0 0 1 5 0" stroke="#222" strokeWidth="1.500" /><circle cx="7.500" cy="13" r="1.500" fill="#222" />
              <path d="M24 6h3l4-4v12l-4-4h-3zM33 5.500q2 2.500 0 5M35.500 3.500q3 4.500 0 9M38 2q4 6 0 12" stroke="#222" />
              <rect x="48.500" y="3.500" width="13" height="9" rx="2" stroke="#222" /><path d="M50 5h8v6h-8zM63 6h1v4h-1z" fill="#222" />
            </Ic>
          </TrayButton>
          <Clock>2:56 AM<br />02-Jan-26</Clock>
        </Tray>
      </Taskbar>

      <Flyout>
        <FlyoutItem aria-label="Bluetooth"><Tile $bg="#0a84ff" $w={12} $round={6}><FaBluetoothB size={12} /></Tile></FlyoutItem>
        <FlyoutItem $hover aria-label="Feather"><Ic w={16}><path d="M1 15L15 1c0 4-1 6-4 9-2 2-5 3-8 4z" fill="#8e5bb0" /><path d="M2 13C2 8 8 3 14 1z" fill="#b98fd0" /><path d="M1 15L14 2" stroke="#5c2f80" /></Ic></FlyoutItem>
        <FlyoutItem aria-label="ChatGPT"><SiOpenai size={16} color="#222" /></FlyoutItem>
        <FlyoutItem aria-label="Microsoft 365"><M365Icon size={17} /></FlyoutItem>
        <FlyoutItem aria-label="Spotify"><SpotifyIcon size={16} /></FlyoutItem>
        <FlyoutItem aria-label="B app"><Tile $bg="#6a11f5" $w={16}>B</Tile></FlyoutItem>
        <FlyoutItem aria-label="NVIDIA"><Ic w={16}><path d="M3 1l12 1v11l-12 1z" fill="#a9b81c" /><path d="M1 3l11-1v13L1 13z" fill="#c6d445" /><circle cx="7" cy="9" r="4" fill="#f4f7dc" /><path d="M4 9c2-3 5-2 6 0-1 2-4 3-4 0" stroke="#a9b81c" /></Ic></FlyoutItem>
        <FlyoutItem aria-label="Windows Security"><Ic w={17} h={17}><path d="M7 0l7 3v5c0 4-3 7-7 8-4-1-7-4-7-8V3z" fill="#1583d8" /><path d="M7 0v8H0V3z" fill="#2fb4f0" /><path d="M11 6l6 10H5z" fill="#fdbd10" /><path d="M11 9v4M11 14v1" stroke="#222" /></Ic></FlyoutItem>
      </Flyout>
    </Window>
  );
}
